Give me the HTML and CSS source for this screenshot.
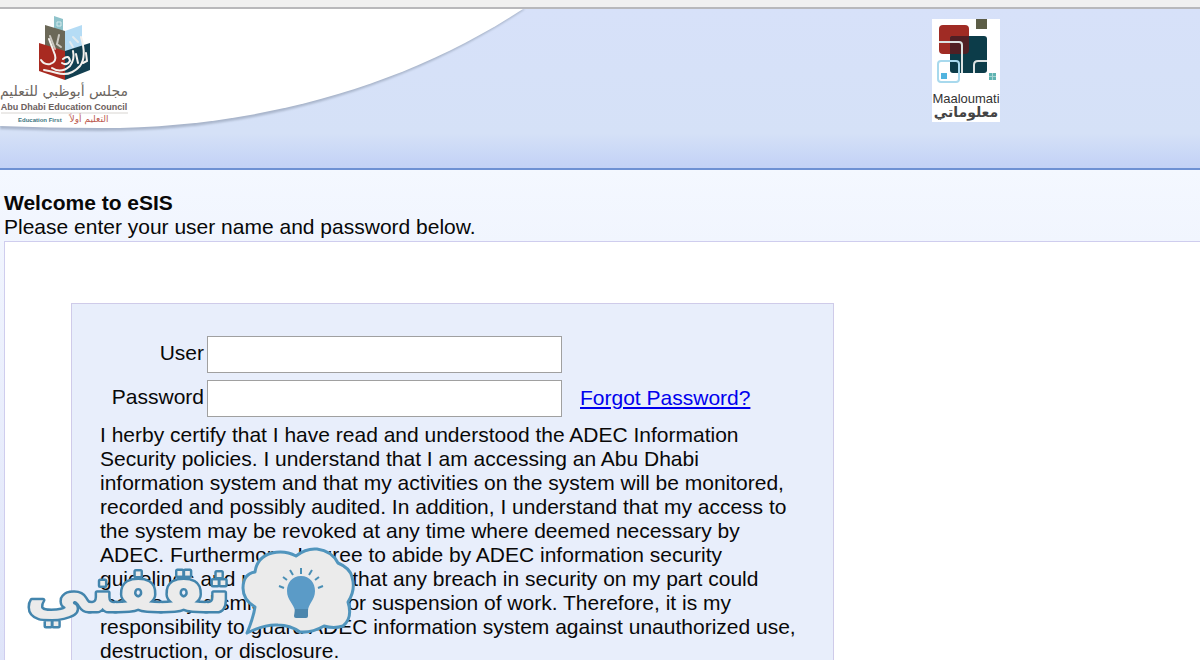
FILE: index.html
```html
<!DOCTYPE html>
<html lang="en">
<head>
  <meta charset="UTF-8">
  <meta name="viewport" content="width=device-width, initial-scale=1.0">
  <title>eSIS Login</title>
  <link rel="stylesheet" href="styles.css">
</head>
<body>

<div class="top-strip"></div>

<header class="header">
  <svg class="adec-logo" width="530" height="126" viewBox="0 0 530 126">
    <defs>
      <filter id="edge" x="-5%" y="-5%" width="110%" height="115%"><feGaussianBlur stdDeviation="1"/></filter>
    </defs>
    <path d="M0 0H525C402 82 252 122 100 122Q50 122 0 120Z" fill="#a9b5cb" filter="url(#edge)"/>
    <path d="M0 0H523C400 81 250 119 100 119Q50 119 0 117Z" fill="#fff"/>
    <!-- book emblem -->
    <path d="M54 7L63 10V26L54 22Z" fill="#8fc3cb"/>
    <path d="M57 13H61V17H57Z" fill="none" stroke="#d3eaed"/>
    <path d="M45 16L65 22V49L45 44Z" fill="#6b6858"/>
    <path d="M65 22L82 16V44L65 49Z" fill="#b5dcf5"/>
    <path d="M39 34L65 42V71L39 62Z" fill="#a82a20"/>
    <path d="M65 42L90 34V61L65 71Z" fill="#123f50"/>
    <g fill="none" stroke="#f4f1ee" stroke-linecap="round">
      <path d="M50 27L55 40M59 26L57 35L61 38M70 33L73 38M73 28L78 33" stroke-width="2" opacity=".7"/>
      <path d="M49 30L55 46Q57 53 50 55Q44 56 41 51" stroke-width="2"/>
      <path d="M81 28Q87 48 80 57Q70 68 57 64Q50 62 44 61" stroke-width="2"/>
      <path d="M52 59Q61 65 70 57Q75 50 73 42M63 50Q69 45 70 52Q67 57 62 54M76 45L78 54M86 44L87 52L83 54" stroke-width="2"/>
    </g>
    <text class="adec-ar" x="64" y="87" text-anchor="middle">مجلس أبوظبي للتعليم</text>
    <text class="adec-en" x="64" y="101" text-anchor="middle">Abu Dhabi Education Council</text>
    <path d="M1 104H128" stroke="#d8d5d1"/>
    <text class="adec-first" x="18" y="113">Education First</text>
    <text class="adec-first-ar" x="89" y="113" text-anchor="middle">التعليم أولاً</text>
  </svg>

  <svg class="maaloumati-logo" width="68" height="103" viewBox="0 0 68 103">
    <rect width="68" height="103" fill="#fff"/>
    <rect x="44" y="0" width="11" height="10" fill="#5c5d46"/>
    <rect x="7" y="6" width="30" height="29" rx="4" fill="#a02b24"/>
    <rect x="18" y="17" width="37" height="37" rx="3" fill="#0c3c49"/>
    <path d="M18 20Q18 17 21 17H37V31Q37 35 33 35H18Z" fill="#501f24"/>
    <path d="M7 23H27Q30 23 30 26V54M42 54V46Q42 42 46 42H55" fill="none" stroke="#dce2e2" stroke-width="2"/>
    <rect x="6" y="42" width="21" height="21" rx="3" fill="none" stroke="#a8d9ed" stroke-width="2"/>
    <rect x="9" y="54" width="6" height="6" fill="#51b4df"/>
    <rect x="57" y="54" width="7" height="7" fill="#5fb3b1"/>
    <path d="M60.500 54V61M57 57.500H64" stroke="#a5d5d3"/>
    <text class="maaloumati-en" x="34" y="84" text-anchor="middle">Maaloumati</text>
    <text class="maaloumati-ar" x="34" y="98" text-anchor="middle">معلوماتي</text>
  </svg>
</header>

<main class="content">
  <h1>Welcome to eSIS</h1>
  <p class="intro">Please enter your user name and password below.</p>

  <div class="panel">
    <form class="login-box">
      <div class="fields">
        <label for="user">User</label>
        <input type="text" id="user" name="user">
        <span></span>

        <label for="password">Password</label>
        <input type="password" id="password" name="password">
        <a href="#">Forgot Password?</a>
      </div>

      <p class="policy">
        I herby certify that I have read and understood the ADEC Information<br>
        Security policies. I understand that I am accessing an Abu Dhabi<br>
        information system and that my activities on the system will be monitored,<br>
        recorded and possibly audited. In addition, I understand that my access to<br>
        the system may be revoked at any time where deemed necessary by<br>
        ADEC. Furthermore, I agree to abide by ADEC information security<br>
        guidelines and understand that any breach in security on my part could<br>
        lead to my dismissal and / or suspension of work. Therefore, it is my<br>
        responsibility to guard ADEC information system against unauthorized use,<br>
        destruction, or disclosure.
      </p>
    </form>
  </div>
</main>

<!-- Watermark -->
<svg class="watermark" width="340" height="100" viewBox="20 540 340 100">
  <text class="watermark-text" x="128" y="611" text-anchor="middle">ثقفني</text>
  <path class="bubble" d="M247 633Q253 619 255 607Q243 600 243 588Q243 574 255 572Q257 557 272 553Q285 550 296 556Q306 548 317 549Q332 551 338 563Q350 568 352 577Q356 590 348 602Q353 618 343 626Q334 629 324 626Q312 633 300 632Q290 625 278 625Q265 624 247 633Z"/>
  <path d="M301 576C292 576 287 583 287 591C287 600 294 604 295 611H308C308 604 315 600 315 591C315 583 310 576 301 576Z" fill="#5b9bc7"/>
  <path d="M295 609H308V616Q308 618 306 618H296Q294 618 294 616Z" fill="#4c86ad"/>
  <path d="M301 568V574M290 570L293 575M312 570L309 575M283 577L287 580M319 577L315 580M279 586L284 588M323 586L318 588" fill="none" stroke="#4a8fb5" stroke-width="2"/>
</svg>

</body>
</html>
```
FILE: styles.css
```css
* { box-sizing: border-box; }
body {
  margin: 0;
  height: 100vh;
  overflow: hidden;
  font-family: "Liberation Sans", Arial, sans-serif;
  font-size: 21px;
  line-height: 24px;
  color: #080808;
  background: linear-gradient(#f4f8ff 170px, #dfe4f9 100vh);
}
h1, p { margin: 0; }

.top-strip { height: 9px; background: #f0f0f0; border-bottom: 2px solid #b8b8bb; }

/* Header */
.header {
  display: flex;
  align-items: flex-start;
  justify-content: space-between;
  height: 161px;
  padding-right: 200px;
  background: linear-gradient(#d7e1f9 0, #d5e1f7 124px, #c3d2f6 158px);
  border-bottom: 2px solid #6e91d3;
}
.maaloumati-logo { margin-top: 10px; }
.adec-ar { font: 14px "DejaVu Sans", sans-serif; fill: #6c6661; }
.adec-en { font: bold 9px "Liberation Sans", sans-serif; fill: #6c605d; }
.adec-first { font: bold 6px "Liberation Sans", sans-serif; fill: #3c7480; }
.adec-first-ar { font: 9px "DejaVu Sans", sans-serif; fill: #bd5b50; }
.maaloumati-en { font: 13px "Liberation Sans", sans-serif; fill: #333; }
.maaloumati-ar { font: bold 14px "DejaVu Sans", sans-serif; fill: #444; }

/* Login form */
.content { padding: 21px 0 0 4px; }
h1 { font-size: 21px; line-height: 24px; }
.panel {
  min-height: 440px;
  margin-top: 2px;
  padding: 61px 20px 0 66px;
  background: #fff;
  border: 1px solid #cfcdee;
  border-right: none;
}
.login-box {
  max-width: 763px;
  padding: 32px 26px 24px 28px;
  background: #e8eefb;
  border: 1px solid #cfcbe9;
}
.fields {
  display: grid;
  grid-template-columns: 104px 355px 1fr;
  gap: 7px 3px;
  align-items: start;
}
.fields label { padding-top: 5px; text-align: right; }
.fields input {
  width: 100%;
  height: 37px;
  padding: 4px 8px;
  font: inherit;
  background: #fff;
  border: 1px solid #a0a0a0;
}
.fields a { margin-left: 15px; padding-top: 6px; color: #0000ee; }
.policy { margin-top: 6px; }

/* Watermark */
.watermark { position: absolute; left: 20px; top: 540px; }
.watermark-text {
  font: bold 63px "DejaVu Sans", sans-serif;
  fill: #ebebeb;
  stroke: #4385ad;
  stroke-width: 5px;
  stroke-linejoin: round;
  paint-order: stroke;
}
.bubble { fill: #ebebeb; stroke: #5195bd; stroke-width: 3px; stroke-linejoin: round; }
```
